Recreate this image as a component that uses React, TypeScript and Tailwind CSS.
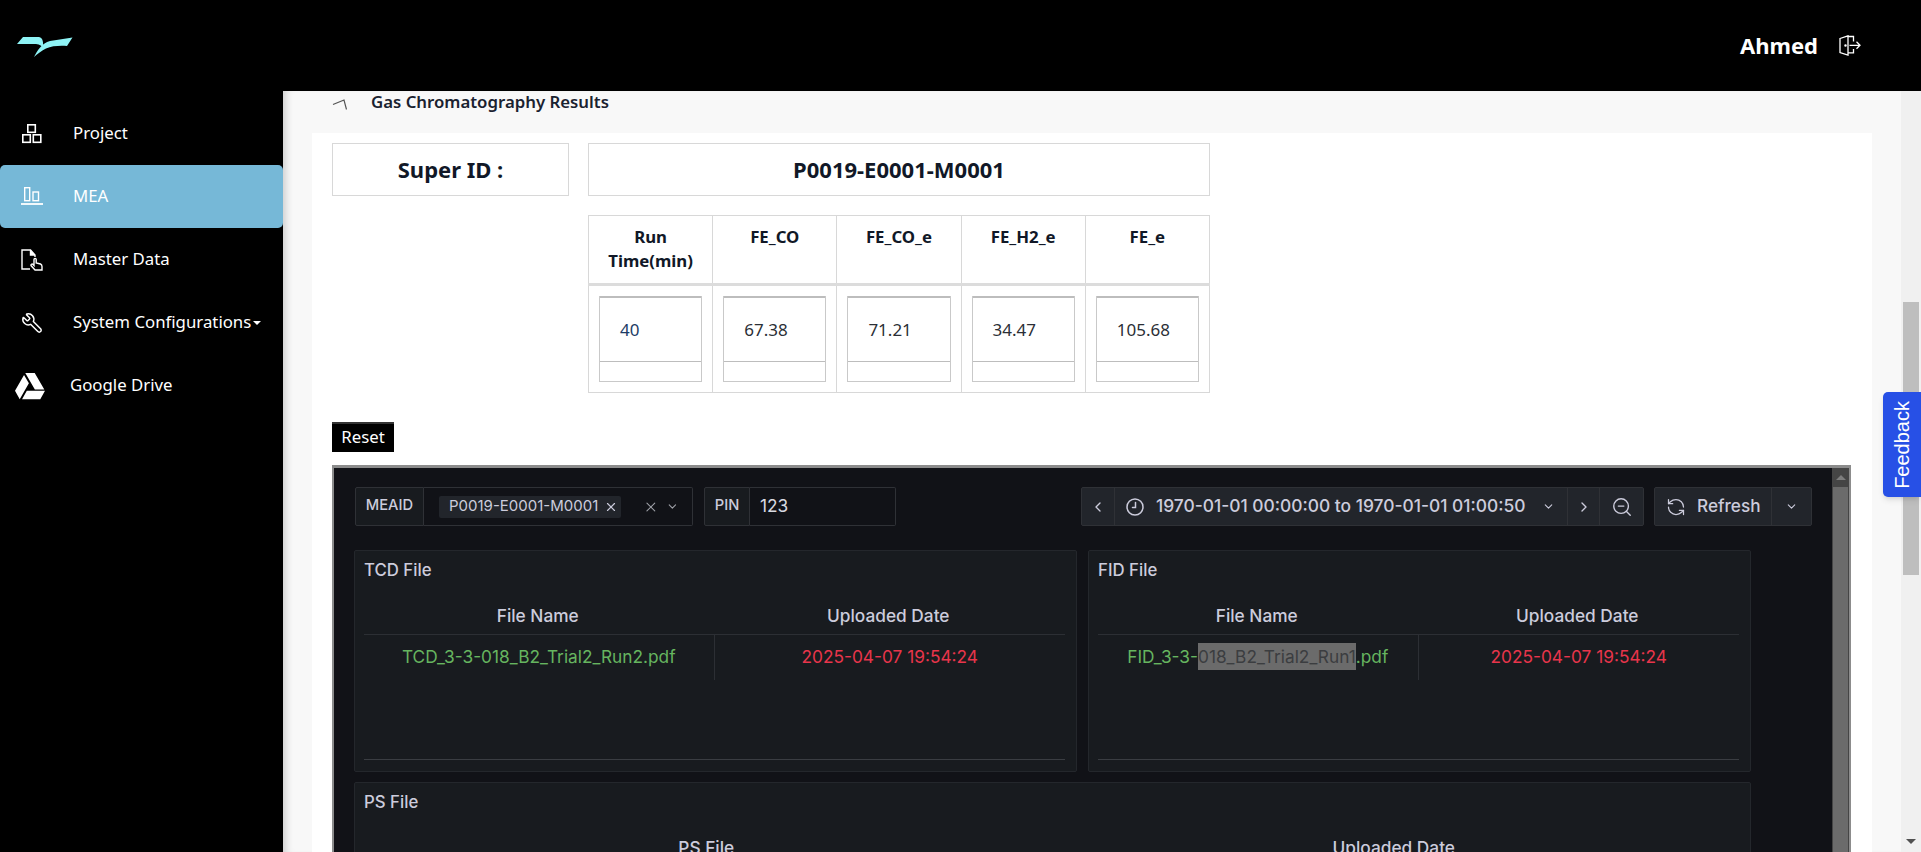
import * as React from 'react';
import { ChevronDown, ChevronLeft, ChevronRight, RefreshCcw, Wrench, X, ZoomOut } from 'lucide-react';
import { FaGoogleDrive } from 'react-icons/fa';

function Logo() {
  return (
    <svg width="56" height="21" viewBox="0 0 56 21" className="ml-[17px] mt-[3px]">
      <path d="M0 7 L6 0 H22 C26 1 26.5 5 26 11 C25 9 23 7.5 19 7 Z" fill="#8ef3f5" />
      <path d="M17 20 C20 14 25 6 33 4 L55.5 0.5 L50 9 C42 8.5 35 9 29 11.5 C25 13.5 20 17 17 20 Z" fill="#8ef3f5" />
    </svg>
  );
}

function ProjectIcon() {
  return (
    <svg width="22" height="22" viewBox="0 0 22 22" fill="none" stroke="currentColor" strokeWidth="1.6">
      <rect x="6.8" y="1.8" width="7.5" height="7.5" />
      <rect x="1.8" y="11.8" width="7.5" height="7.5" />
      <rect x="12.3" y="11.8" width="7.5" height="7.5" />
    </svg>
  );
}

function MeaIcon() {
  return (
    <svg width="22" height="22" viewBox="0 0 22 22" fill="none" stroke="currentColor" strokeWidth="1.4">
      <rect x="3.7" y="1.7" width="5" height="13" />
      <rect x="12" y="6" width="5.5" height="8.7" />
      <path d="M0 18 H22" strokeWidth="1.8" />
    </svg>
  );
}

function MasterDataIcon() {
  return (
    <svg width="22" height="22" viewBox="0 0 22 22" fill="none" stroke="currentColor" strokeWidth="1.4">
      <path d="M9 20 H1 V1 H9.5 L14 6 V8" />
      <path d="M9.5 1 V6 H14" fill="currentColor" />
      <path d="M14 21 L10 16.5 C9.5 15.5 11 14.5 12 15.5 L13 16.5 V10.5 C13 9 15.2 9 15.2 10.5 V14 L19.5 15 C20.7 15.5 21 16.5 21 17.5 V21 Z" />
    </svg>
  );
}

function LogoutIcon() {
  return (
    <svg width="22" height="21" viewBox="0 0 22 21" fill="none" stroke="currentColor" strokeWidth="1.3">
      <path d="M1 3.5 L9 0.8 V20 L1 17.5 Z" />
      <path d="M9 1.5 H14.5 V6.5 M14.5 14 V17.8 H9" />
      <path d="M10.5 10.3 H21 M17.5 6.8 L21 10.3 L17.5 13.8" />
      <circle cx="6.5" cy="10.5" r="0.6" fill="currentColor" />
    </svg>
  );
}

function ClockIcon() {
  return (
    <svg width="18" height="18" viewBox="0 0 18 18" fill="none" stroke="currentColor" strokeWidth="1.5" strokeLinecap="round">
      <circle cx="9" cy="9" r="8" />
      <path d="M9.5 4.5 V9.5 H6.5" />
    </svg>
  );
}

function NavItem({
  icon,
  label,
  active,
  caret,
  drive,
}: {
  icon: React.ReactNode;
  label: string;
  active?: boolean;
  caret?: boolean;
  drive?: boolean;
}) {
  return (
    <div
      className={`h-[63px] flex items-center rounded-[5px] text-white text-[16.8px] ${active ? 'bg-[#76b8d7]' : ''}`}
    >
      <div className={drive ? 'w-[70px] pl-[15px] shrink-0' : 'w-[73px] pl-[21px] shrink-0'}>{icon}</div>
      <span className="mb-[2px]">{label}</span>
      {caret && <span className="ml-[2px] mt-[1px] border-x-[4px] border-t-[4px] border-x-transparent border-t-white" />}
    </div>
  );
}

const columns = [
  { head: 'Run Time(min)', value: '40', tone: 'text-[#1d3c66]' },
  { head: 'FE_CO', value: '67.38', tone: 'text-[#2b2f36]' },
  { head: 'FE_CO_e', value: '71.21', tone: 'text-[#2b2f36]' },
  { head: 'FE_H2_e', value: '34.47', tone: 'text-[#2b2f36]' },
  { head: 'FE_e', value: '105.68', tone: 'text-[#2b2f36]' },
];

function ResultsTable() {
  return (
    <table className="table-fixed w-[622px] h-[178px] border-collapse text-[16.8px] text-[#111827]">
      <thead>
        <tr className="h-[69px] border-b-[3px] border-[#dcdcdc]">
          {columns.map((c) => (
            <th key={c.head} className="border border-[#d8d8d8] px-1 pt-[9px] align-top font-bold leading-[24px]">
              {c.head}
            </th>
          ))}
        </tr>
      </thead>
      <tbody>
        <tr>
          {columns.map((c) => (
            <td key={c.head} className="border border-[#d8d8d8] px-[10px] pt-[10px] align-top">
              <div className="border-x border-b border-[#c9c9c9]">
                <div className={`h-[66px] flex items-center pl-5 border-t-2 border-b border-[#bdbdbd] text-[17px] ${c.tone}`}>
                  {c.value}
                </div>
                <div className="h-[19px]" />
              </div>
            </td>
          ))}
        </tr>
      </tbody>
    </table>
  );
}

function FilePanel({
  title,
  heads,
  file,
  date,
  tall = true,
}: {
  title: string;
  heads: string[];
  file?: React.ReactNode;
  date?: string;
  tall?: boolean;
}) {
  return (
    <div className={`bg-[#181b1f] border border-[#24272c] rounded-[2px] pl-[9px] pr-[11px] flex flex-col ${tall ? 'h-[222px]' : 'col-span-2 h-[120px]'}`}>
      <h3 className="h-[40px] pt-[7px] shrink-0 text-[16.8px] font-medium text-[#ccccdc] leading-[24px]">{title}</h3>
      <div className="grid grid-cols-2 h-[44px] shrink-0 border-b border-[#2c2f34] text-[17.3px] font-medium text-[#ccccdc] text-center items-center pt-[6px]">
        {heads.map((h) => (
          <div key={h} className="pr-[3px]">
            {h}
          </div>
        ))}
      </div>
      {file && (
        <>
          <div className="grid grid-cols-2 h-[45px] shrink-0 text-[17.3px] text-center items-center">
            <div className="h-full flex items-center justify-center pb-[2px] text-[#66b55f] border-r border-[#2c2f34]">
              <span>{file}</span>
            </div>
            <div className="pb-[2px] text-[#e8354b]">{date}</div>
          </div>
          <div className="flex-1" />
          <div className="mb-[11px] border-b border-[#3a3d42]" />
        </>
      )}
    </div>
  );
}

function Toolbar() {
  return (
    <div className="flex justify-between pl-px text-[#ccccdc] h-[39px]">
      <div className="flex gap-[11px]">
        <div className="flex">
          <div className="w-[69px] pb-[2px] flex items-center justify-center bg-[#181b1f] border border-[#2f3136] rounded-l-[2px] text-[14.7px] font-medium">
            MEAID
          </div>
          <div className="w-[269px] flex items-center pl-[15px] pr-[13px] bg-[#111217] border border-l-0 border-[#2f3136] rounded-r-[2px]">
            <div className="h-[22px] w-[185px] flex items-center pl-[10px] gap-[6px] bg-[#22252b] rounded-[2px] text-[15px]">
              <span className="mb-[1px]">P0019-E0001-M0001</span>
              <X size={14} strokeWidth={2} />
            </div>
            <X size={16} strokeWidth={1.6} className="ml-[22px] text-[#9fa1a8]" />
            <ChevronDown size={13} strokeWidth={2} className="ml-[8px] text-[#9fa1a8]" />
          </div>
        </div>
        <div className="flex">
          <div className="w-[46px] pb-[2px] flex items-center justify-center bg-[#181b1f] border border-[#2f3136] rounded-l-[2px] text-[14.7px] font-medium">
            PIN
          </div>
          <div className="w-[146px] pb-[1px] flex items-center pl-[10px] bg-[#111217] border border-l-0 border-[#2f3136] rounded-r-[2px] text-[17.3px] text-[#d8d9e0]">
            123
          </div>
        </div>
      </div>

      <div className="flex gap-[10px]">
        <div className="flex bg-[#22252b] border border-[#2f3136] rounded-[2px]">
          <div className="w-[33px] flex items-center justify-center border-r border-[#2f3136]">
            <ChevronLeft size={16} />
          </div>
          <div className="w-[453px] flex items-center pl-[11px] border-r border-[#2f3136] text-[17.4px] font-medium">
            <ClockIcon />
            <span className="ml-[12px] mb-[1px]">1970-01-01 00:00:00 to 1970-01-01 01:00:50</span>
            <ChevronDown size={13} strokeWidth={2} className="ml-[16px]" />
          </div>
          <div className="w-[32px] flex items-center justify-center border-r border-[#2f3136]">
            <ChevronRight size={16} />
          </div>
          <div className="w-[43px] flex items-center justify-center">
            <ZoomOut size={22} strokeWidth={1.5} />
          </div>
        </div>
        <div className="flex bg-[#22252b] border border-[#2f3136] rounded-[2px]">
          <div className="w-[117px] flex items-center pl-[11px] gap-[11px] border-r border-[#2f3136] text-[17.2px] font-medium">
            <RefreshCcw size={20} strokeWidth={1.5} />
            <span className="mb-[1px]">Refresh</span>
          </div>
          <div className="w-[39px] flex items-center justify-center">
            <ChevronDown size={13} strokeWidth={2} />
          </div>
        </div>
      </div>
    </div>
  );
}

function DashboardFrame() {
  return (
    <div className="mt-[13px] w-[1519px] h-[600px] flex bg-[#111217] border-l-[2px] border-t-[3px] border-r-[2px] border-[#8c8c8c] font-['Inter',sans-serif]">
      <div className="flex-1 pl-[20px] pr-[20px] pt-[19px]">
        <Toolbar />
        <div className="mt-[24px] grid grid-cols-[723px_663px] gap-x-[11px] gap-y-[10px]">
          <FilePanel
            title="TCD File"
            heads={['File Name', 'Uploaded Date']}
            file="TCD_3-3-018_B2_Trial2_Run2.pdf"
            date="2025-04-07 19:54:24"
          />
          <FilePanel
            title="FID File"
            heads={['File Name', 'Uploaded Date']}
            file={
              <>
                FID_3-3-
                <span className="inline-block h-[27px] leading-[27px] bg-[#6b6b6b] text-[#3b3d40]">018_B2_Trial2_Run1</span>
                .pdf
              </>
            }
            date="2025-04-07 19:54:24"
          />
          <FilePanel title="PS File" heads={['PS File', 'Uploaded Date']} tall={false} />
        </div>
      </div>
      {/* frame scrollbar */}
      <div className="w-[17px] bg-[#454545] flex flex-col items-center">
        <div className="h-[19px] flex items-center justify-center">
          <span className="border-x-[5px] border-b-[5px] border-x-transparent border-b-[#7d7d7d]" />
        </div>
        <div className="w-[15px] flex-1 bg-[#6b6b6b]" />
      </div>
    </div>
  );
}

export default function App() {
  return (
    <div className="relative h-[852px] w-full overflow-hidden flex flex-col bg-black font-['Noto_Sans',sans-serif]">
      <header className="h-[91px] shrink-0 flex items-center justify-between text-white">
        <Logo />
        <div className="flex items-center mr-[60px] gap-[21px]">
          <span className="text-[22px] font-bold mb-[1px]">Ahmed</span>
          <LogoutIcon />
        </div>
      </header>

      <div className="flex flex-1 min-h-0">
        <aside className="w-[283px] shrink-0 pt-[11px]">
          <NavItem icon={<ProjectIcon />} label="Project" />
          <NavItem icon={<MeaIcon />} label="MEA" active />
          <NavItem icon={<MasterDataIcon />} label="Master Data" />
          <NavItem icon={<Wrench size={22} strokeWidth={1.6} className="-scale-x-100" />} label="System Configurations" caret />
          <NavItem icon={<FaGoogleDrive size={30} />} label="Google Drive" drive />
        </aside>

        <main className="flex-1 min-w-0 flex bg-[#f8f8f8] shadow-[inset_8px_0_8px_-6px_rgba(0,0,0,0.2)]">
          <div className="flex-1 min-w-0 px-[29px]">
            <div className="h-[42px] flex items-start pl-[20px] text-[16.8px] font-semibold text-[#1a2230] leading-[22px]">
              <svg width="15" height="11" viewBox="0 0 15 11" fill="none" stroke="#555" strokeWidth="1.2" className="mt-[8px]">
                <path d="M1 5.5 L12 1 L14.5 10.5" />
              </svg>
              <span className="ml-[24px]">Gas Chromatography Results</span>
            </div>

            <div className="bg-white pl-[20px] pt-[10px] h-[800px]">
              <div className="flex gap-[19px] text-[22px] font-bold text-[#111827]">
                <div className="w-[237px] h-[53px] flex items-center justify-center border border-[#d8d8d8]">Super ID :</div>
                <div className="w-[622px] h-[53px] flex items-center justify-center border border-[#d8d8d8]">P0019-E0001-M0001</div>
              </div>
              <div className="ml-[256px] mt-[19px]">
                <ResultsTable />
              </div>
              <button className="mt-[29px] w-[62px] h-[30px] pb-[3px] bg-black border-t-2 border-[#333] text-white text-[16.8px] block">
                Reset
              </button>
              <DashboardFrame />
            </div>
          </div>

          {/* page scrollbar */}
          <div className="relative w-5 shrink-0 bg-[#f0f0f0] flex flex-col items-center">
            <div className="mt-[211px] w-4 h-[273px] bg-[#bebebe]" />
            <span className="absolute bottom-[8px] border-x-[5px] border-t-[5px] border-x-transparent border-t-[#505050]" />
          </div>
        </main>
      </div>

      <div className="absolute left-[1883px] top-[392px] w-[38px] h-[105px] flex items-center justify-center bg-[#2750e6] rounded-l-[5px] shadow-md font-['Liberation_Sans',sans-serif] text-white text-[20px]">
        <span className="[writing-mode:vertical-rl] rotate-180">Feedback</span>
      </div>
    </div>
  );
}
